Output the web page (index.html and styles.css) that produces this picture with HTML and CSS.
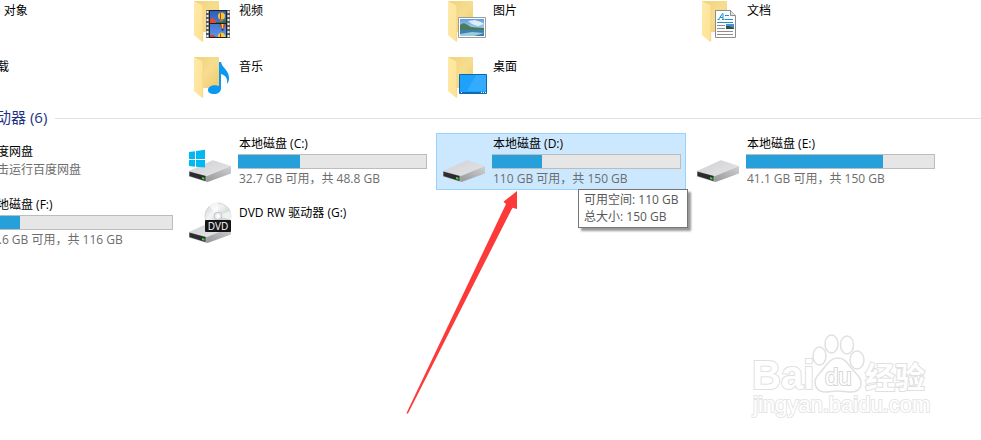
FILE: index.html
```html
<!DOCTYPE html>
<html lang="zh-CN">
<head>
<meta charset="utf-8">
<title>此电脑</title>
<link rel="stylesheet" href="styles.css">
</head>
<body>
<svg class="defs" aria-hidden="true">
  <defs>
    <linearGradient id="back" x1="0" y1="0" x2="1" y2="1"><stop offset="0" stop-color="#f0d27a"/><stop offset=".5" stop-color="#f6dd8f"/><stop offset="1" stop-color="#ecca68"/></linearGradient>
    <linearGradient id="flap" x1="0" y1="0" x2="1" y2="1"><stop offset="0" stop-color="#ffeaa8"/><stop offset="1" stop-color="#fde194"/></linearGradient>
    <linearGradient id="top" x1="0" y1="0" x2="1" y2="1"><stop offset="0" stop-color="#cfd0d2"/><stop offset="1" stop-color="#e6e6e8"/></linearGradient>
    <linearGradient id="side" x1="0" y1="1" x2="1" y2="0"><stop offset="0" stop-color="#98989a"/><stop offset="1" stop-color="#d0d0d2"/></linearGradient>
    <linearGradient id="sky" x1="0" y1="0" x2="0" y2="1"><stop offset="0" stop-color="#5f9fe0"/><stop offset="1" stop-color="#e3f1fa"/></linearGradient>
    <linearGradient id="film" x1="0" y1="0" x2="0" y2="1"><stop offset="0" stop-color="#2f5fbd"/><stop offset="1" stop-color="#5a93e6"/></linearGradient>
    <linearGradient id="disc" x1="0" y1="0" x2="1" y2="1"><stop offset="0" stop-color="#c9cdd0"/><stop offset=".35" stop-color="#f3f4f4"/><stop offset=".6" stop-color="#d2ded9"/><stop offset="1" stop-color="#bdbfc2"/></linearGradient>
    <symbol id="folder" viewBox="0 0 48 48">
      <path fill="url(#back)" d="M7 5h24v31H15z"/>
      <path fill="url(#flap)" d="M6 5l9 4v37l-2-1-7-6z"/>
      <path fill="none" stroke="#efd083" stroke-width=".6" d="M6.500 5.200L14.800 9.200V45"/>
    </symbol>
    <symbol id="drive" viewBox="0 0 48 48">
      <path fill="url(#top)" d="M1 33L24 22.500q1-.4 2 0L43 28l-24 10z"/>
      <path fill="url(#side)" d="M19 38l24-10v7.500L21 43.500l-2 .5z"/>
      <path fill="#a9a9ab" d="M1 33l18 5v6L1 38.500z"/>
      <path fill="#2c2c2e" d="M1.500 33.700L17.500 38v5L1.500 38z"/>
      <path fill="#35e02b" d="M14 39l2.500.7v2L14 41z"/>
    </symbol>
  </defs>
</svg>

<main class="view">
  <ul class="grid">
    <li class="tile folder"><svg class="icon" viewBox="0 0 48 48"><use href="#folder"/></svg><div class="info"><span class="name">3D 对象</span></div></li>
    <li class="tile folder">
      <svg class="icon" viewBox="0 0 48 48"><use href="#folder"/>
        <path fill="#5c5c5e" d="M18 14h24v28H18z"/>
        <path stroke="#f2f2f2" stroke-width="2" stroke-dasharray="2 2" d="M19.500 15v27M40.500 15v27"/>
        <path fill="#202022" d="M21 14h18v28H21z"/>
        <path fill="url(#film)" d="M22 15h16v12H22zM22 28h16v13H22z"/>
        <path fill="#e24b33" d="M22 23l3-1 3 3v2h-6z"/>
        <path fill="#1f7b36" d="M28 26l4 0 6-2v3H28z"/>
        <circle cx="33.500" cy="20" r="3.500" fill="#f6c92c"/><path stroke="#b63b25" fill="none" d="M32.500 17v6"/><path fill="#e46c22" d="M32.500 23.500h2v2h-2z"/>
        <path fill="#cf3531" d="M31 28h7l-2.500 4h-2z"/><path fill="#ffd338" d="M33.500 28h2l-.5 4h-1z"/><path fill="#4c281e" d="M33.500 33h2v1.500h-2z"/>
        <path fill="#f7cf31" d="M30 41q-.5-4 3.500-4.500 3.500.5 4 4.500z"/><path stroke="#b63b25" d="M32.500 37.500v3.500"/><path fill="#d64232" d="M22 39l4 0 2 2h-6z"/>
      </svg>
      <div class="info"><span class="name">视频</span></div></li>
    <li class="tile folder">
      <svg class="icon" viewBox="0 0 48 48"><use href="#folder"/>
        <path fill="#fff" stroke="#9c9c9e" d="M16.500 21.500h27v20h-27z"/>
        <path fill="url(#sky)" d="M18 23h24v17H18z"/>
        <path fill="#f7fbff" opacity=".8" d="M26 25l7-1 6 2 3 2-6 2-6-2z"/>
        <path fill="#4a7c58" d="M18 29q3-3 6-1l5 3 13 1v2H18z"/>
        <path fill="#3f7fb3" d="M18 34h24v6H18z"/><path fill="#9accdf" d="M18 38l12-2 12 1-10 3H18z"/>
      </svg>
      <div class="info"><span class="name">图片</span></div></li>
    <li class="tile folder">
      <svg class="icon" viewBox="0 0 48 48"><use href="#folder"/>
        <path fill="#fdfdfd" stroke="#8c8c8e" d="M19.500 14.500h15l5 5v22h-20z"/>
        <path fill="#e2e2e4" stroke="#8c8c8e" d="M34.500 14.500v5h5"/>
        <path fill="none" stroke="#1e92cf" d="M22.500 23.500l4-6h.5v6M24 21.500h3M21.500 23.500h2M26 23.500h2.500M29 19.500h4M29 23.500h8M21 26.500h16"/>
        <path stroke="#8b8e91" d="M21 29.500h8M21 32.500h8M21 35.500h16M21 38.500h16"/>
        <path fill="#4c8fcf" d="M30 28h8v5h-8z"/><path fill="#285642" d="M30 30l3 0 5 2v1h-8z"/>
      </svg>
      <div class="info"><span class="name">文档</span></div></li>
    <li class="tile folder"><svg class="icon" viewBox="0 0 48 48"><use href="#folder"/></svg><div class="info"><span class="name">下载</span></div></li>
    <li class="tile folder">
      <svg class="icon" viewBox="0 0 48 48"><use href="#folder"/>
        <path fill="#0a98f2" d="M31 10h2c1 6 8 8 8 16 0 3-1 5-2 6 1-6-2-9-6-10v14c0 4-3 6-7 6-3 0-6-1-6-4 0-4 6-6 11-4z"/>
      </svg>
      <div class="info"><span class="name">音乐</span></div></li>
    <li class="tile folder">
      <svg class="icon" viewBox="0 0 48 48"><use href="#folder"/>
        <path fill="#1ea1fb" stroke="#0d68a9" d="M17.500 22.500h27v19h-27z"/>
        <path fill="#43b2ff" opacity=".6" d="M34 23h10v16H25z"/>
        <path fill="#0b6fb5" d="M18 40h26v1H18z"/><path fill="#fff" d="M19 40h1v1h-1zM39 40h1v1h-1zM41 40h1v1h-1zM43 40h1v1h-1z"/>
      </svg>
      <div class="info"><span class="name">桌面</span></div></li>
  </ul>

  <h2 class="heading">设备和驱动器 (6)</h2>

  <ul class="grid">
    <li class="tile plain"><svg class="icon" viewBox="0 0 48 48"><use href="#drive"/></svg><div class="info"><span class="name">百度网盘</span><span class="detail">双击运行百度网盘</span></div></li>
    <li class="tile"><svg class="icon" viewBox="0 0 48 48"><use href="#drive"/>
        <path fill="#00b9f2" d="M1 14l6-.8V21H1zM8 13l9-1.200V21H8zM1 22h6v6.800L1 28zM8 22h9v7.500L8 28.800z"/></svg>
      <div class="info"><span class="name">本地磁盘 (C:)</span><div class="bar"><div class="used" style="width:33%"></div></div><span class="detail">32.7 GB 可用，共 48.8 GB</span></div></li>
    <li class="tile selected"><svg class="icon" viewBox="0 0 48 48"><use href="#drive"/></svg>
      <div class="info"><span class="name">本地磁盘 (D:)</span><div class="bar"><div class="used" style="width:26.500%"></div></div><span class="detail">110 GB 可用，共 150 GB</span></div>
      <div class="tooltip" role="tooltip">可用空间: 110 GB<br>总大小: 150 GB</div>
      <svg class="arrow" viewBox="0 0 112 223" aria-hidden="true"><path fill="#fc3a3a" d="M111 0v18l-4.500-1.300L2 222.500H.3L100 13l-2.500-2.300z"/></svg></li>
    <li class="tile"><svg class="icon" viewBox="0 0 48 48"><use href="#drive"/></svg>
      <div class="info"><span class="name">本地磁盘 (E:)</span><div class="bar"><div class="used" style="width:73%"></div></div><span class="detail">41.1 GB 可用，共 150 GB</span></div></li>
    <li class="tile"><svg class="icon" viewBox="0 0 48 48"><use href="#drive"/></svg>
      <div class="info"><span class="name">本地磁盘 (F:)</span><div class="bar"><div class="used" style="width:19%"></div></div><span class="detail">93.6 GB 可用，共 116 GB</span></div></li>
    <li class="tile plain"><svg class="icon" viewBox="0 0 48 48"><use href="#drive"/>
        <circle cx="30" cy="17" r="13" fill="url(#disc)" stroke="#c3c5c6" stroke-width=".6"/>
        <path fill="#fff" opacity=".65" d="M30 17L21 7q4-4 9-3zM30 17l12-5q2 5 1 9z"/>
        <circle cx="30" cy="17" r="4" fill="#e7e9e9" stroke="#b4b7b8" stroke-width=".7"/><circle cx="30" cy="17" r="1.800" fill="#fff"/>
        <rect x="17" y="21" width="26" height="12" rx="1" fill="#151517"/>
        <text class="dvd" x="30" y="31" text-anchor="middle">DVD</text></svg>
      <div class="info"><span class="name">DVD RW 驱动器 (G:)</span></div></li>
  </ul>

  <svg class="watermark" viewBox="0 0 180 90" role="img" aria-label="Baidu 经验">
    <g fill="#fff" stroke="#e0e0e0" stroke-width="1.500">
      <ellipse cx="68.500" cy="24" rx="6.500" ry="9"/><ellipse cx="80.500" cy="12" rx="6.500" ry="9"/><ellipse cx="96" cy="13" rx="6.500" ry="9"/><ellipse cx="106" cy="28" rx="7" ry="9"/>
      <path d="M87 26c7 0 10 6 14 11 5 6 9 8 9 14 0 6-4 9-10 9-5 0-8-1-13-1s-8 1-13 1c-6 0-10-4-10-10 0-6 5-8 9-14 4-5 7-10 14-10z"/>
      <text class="brand" x="1" y="57">Bai</text>
      <text class="du" x="74" y="53">du</text>
      <text class="cjk" x="114" y="56">经验</text>
      <text class="domain" x="2" y="80">jingyan.baidu.com</text>
    </g>
  </svg>
</main>
</body>
</html>
```
FILE: styles.css
```css
* {
  box-sizing: border-box;
}

body {
  margin: 0;
  background: #fff;
  color: #000;
  font: 12px/18px "Open Sans", "Noto Sans CJK SC", sans-serif;
}

.defs {
  position: absolute;
  width: 0;
  height: 0;
}

.view {
  position: relative;
  min-height: 100vh;
  overflow: hidden;
  display: flow-root;
}

/* The list is scrolled a little past its left and top edges. */
.grid {
  display: grid;
  grid-template-columns: repeat(4, 250px);
  gap: 4px;
  margin: 0 0 0 -72px;
  padding: 0;
  list-style: none;
}

.grid:first-child {
  margin-top: -6px;
}

.tile {
  position: relative;
  display: flex;
  gap: 2px;
  min-height: 57px;
  padding: 1px 4px 1px 5px;
  border: 1px solid transparent;
}

.tile.folder {
  min-height: 52px;
  padding-top: 0;
}

.tile.selected {
  background: #cce8ff;
  border-color: #99d1ff;
}

.icon {
  flex: none;
  width: 48px;
  height: 48px;
  margin-top: 3px;
}

.folder .icon {
  margin-top: 1px;
}

.info {
  flex: 1;
  display: flex;
  flex-direction: column;
  white-space: nowrap;
}

.folder .info {
  padding-top: 7px;
}

.plain .info {
  padding-top: 8px;
}

.name,
.detail {
  padding-left: 1px;
}

.detail {
  color: #6d6d6d;
}

.bar {
  height: 15px;
  margin: 1px 0;
  border: 1px solid #bcbcbc;
  background: #e6e6e6;
}

.used {
  height: 100%;
  margin-left: -1px;
  background: #26a0da;
}

.heading {
  display: flex;
  align-items: center;
  gap: 8px;
  margin: 5px 0 6px -64px;
  color: #1e3287;
  font-size: 15px;
  font-weight: 400;
  line-height: 20px;
  white-space: nowrap;
}

.heading::after {
  content: "";
  flex: 1;
  height: 1px;
  margin-top: 2px;
  background: #e2e2e2;
}

.tooltip {
  position: absolute;
  z-index: 2;
  top: 55px;
  left: 141px;
  min-width: 110px;
  padding: 1px 6px 2px 5px;
  border: 1px solid #767676;
  background: #fff;
  box-shadow: 3px 3px 2px rgba(0, 0, 0, 0.4);
  color: #575757;
  line-height: 17px;
  white-space: nowrap;
}

.arrow {
  position: absolute;
  z-index: 1;
  top: 57px;
  left: -31px;
  width: 112px;
  height: 223px;
}

.dvd {
  fill: #fff;
  font: 10px "Open Sans", sans-serif;
}

.watermark {
  position: absolute;
  right: 50px;
  bottom: 18px;
  width: 180px;
  height: 90px;
}

.watermark text {
  paint-order: stroke;
  stroke-width: 2px;
}

.brand {
  font: bold 40px "Liberation Sans", sans-serif;
}

.watermark .du {
  font: 24px "Liberation Sans", sans-serif;
  stroke: #d6d6d6;
}

.cjk {
  font: bold 30px "Noto Sans CJK SC", sans-serif;
}

.watermark .domain {
  font: 22px "Liberation Sans", sans-serif;
  stroke: #e6e6e6;
}
```
